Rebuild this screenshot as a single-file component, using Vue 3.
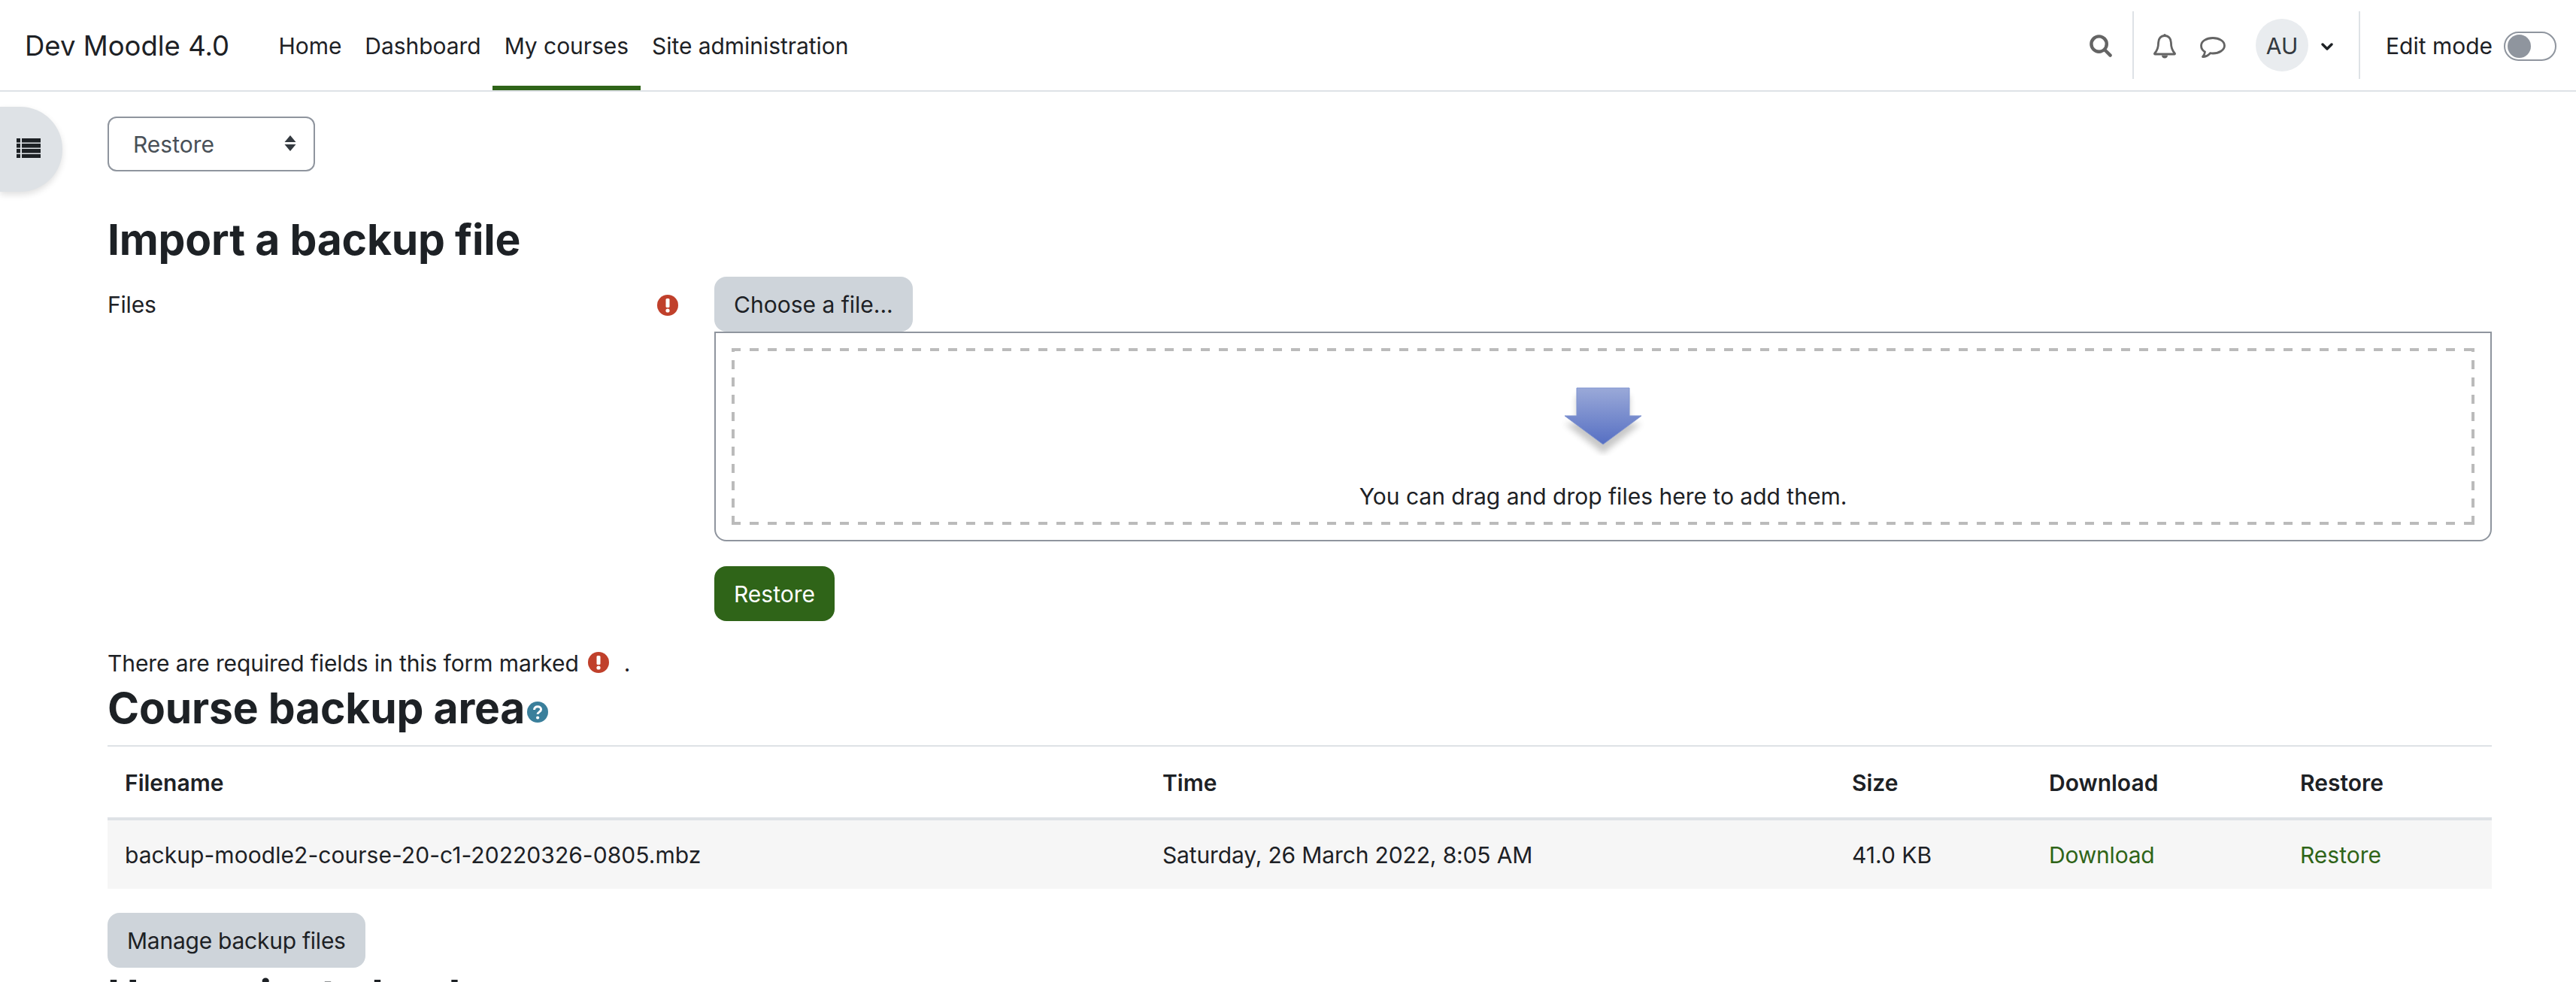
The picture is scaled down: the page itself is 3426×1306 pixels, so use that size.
<script setup>
const navItems = [
  { label: 'Home', active: false },
  { label: 'Dashboard', active: false },
  { label: 'My courses', active: true },
  { label: 'Site administration', active: false },
]
const headers = ['Filename', 'Time', 'Size', 'Download', 'Restore']
</script>

<template>
  <div class="page">
    <header class="navbar">
      <div class="brand">Dev Moodle 4.0</div>
      <nav class="nav">
        <a v-for="item in navItems" :key="item.label" class="nav-item" :class="{ active: item.active }">{{ item.label }}</a>
      </nav>
      <div class="nav-right">
        <svg class="ic-search" viewBox="0 0 30 30" width="30" height="30" fill="none" stroke="#646464" stroke-width="4.4" stroke-linecap="round">
          <circle cx="12.6" cy="12.6" r="10.2" />
          <path d="M20.5 20.5L27.6 27.6" />
        </svg>
        <span class="divider first"></span>
        <svg class="ic-bell" viewBox="0 0 30 34" width="30" height="34" fill="none" stroke="#646464" stroke-width="2.8" stroke-linejoin="round">
          <path d="M15 3.5c-5 0-8.400 3.800-8.400 9 0 7-1.200 10.500-5 14.500c-.4.500 0 1 .6 1h25.600c.6 0 1-.5.600-1c-3.800-4-5-7.500-5-14.500c0-5.200-3.400-9-8.400-9z" />
          <circle cx="15" cy="2.500" r="1.600" fill="#646464" stroke="none" />
          <path d="M11 29.500c0 2.500 1.800 4 4 4s4-1.500 4-4z" fill="#646464" stroke="none" />
        </svg>
        <svg class="ic-comment" viewBox="0 0 34 28" width="34" height="28" fill="none" stroke="#646464" stroke-width="2.800" stroke-linejoin="round">
          <path d="M17 1.500c8.500 0 15.500 4.400 15.500 10.200S25.500 22 17 22c-1.200 0-2.400-.1-3.500-.3C11 24.500 7.500 26.500 3.500 26.500c1.800-2 2.800-4 3-6.500C3.300 18 1.500 15 1.500 11.700C1.500 5.900 8.500 1.500 17 1.500z" />
        </svg>
        <div class="avatar">AU</div>
        <svg class="ic-chevron" viewBox="0 0 16 10" width="16" height="10" fill="none" stroke="#1d2125" stroke-width="3.400" stroke-linecap="round" stroke-linejoin="round">
          <path d="M2 2l6 6 6-6" />
        </svg>
        <span class="divider second"></span>
        <span class="edit-label">Edit mode</span>
        <span class="toggle"><span class="knob"></span></span>
      </div>
    </header>

    <button class="drawer-toggle" aria-label="Open course index">
      <svg viewBox="0 0 32 26" width="32" height="26" fill="#1d2125">
        <rect x="0" y="0" width="5" height="5.500" /><rect x="7" y="0" width="25" height="5.500" />
        <rect x="0" y="7" width="5" height="5.500" /><rect x="7" y="7" width="25" height="5.500" />
        <rect x="0" y="14" width="5" height="5.500" /><rect x="7" y="14" width="25" height="5.500" />
        <rect x="0" y="21" width="5" height="5" /><rect x="7" y="21" width="25" height="5" />
      </svg>
    </button>

    <main class="content">
      <div class="select">
        <span>Restore</span>
        <svg viewBox="0 0 18 21" width="18" height="21" fill="#343a40">
          <path d="M9 0l7.500 9H1.500zM9 21l-7.500-9h15z" />
        </svg>
      </div>

      <h2 class="h-import">Import a backup file</h2>

      <div class="form-row">
        <div class="label-col">
          <span class="files-label">Files</span>
          <svg class="req req-files" viewBox="0 0 28 28" width="28" height="28">
            <circle cx="14" cy="14" r="14" fill="#c0402b" />
            <rect x="11.500" y="5" width="5" height="12" rx="1.500" fill="#fff" />
            <circle cx="14" cy="21" r="2.600" fill="#fff" />
          </svg>
        </div>
        <div class="field-col">
          <button class="btn btn-grey">Choose a file...</button>
          <div class="dropbox">
            <div class="dashed">
              <svg class="arrow" viewBox="0 0 130 96" width="130" height="96">
                <defs>
                  <linearGradient id="arrowFill" x1="0" y1="0" x2="0" y2="1">
                    <stop offset="0" stop-color="#9aa9d8" />
                    <stop offset="1" stop-color="#566fc3" />
                  </linearGradient>
                  <filter id="arrowShadow" x="-20%" y="-20%" width="140%" height="160%">
                    <feGaussianBlur stdDeviation="4" />
                  </filter>
                </defs>
                <path d="M30 10h70v37h16L65 87 14 47h16z" fill="#000" opacity=".22" filter="url(#arrowShadow)" transform="translate(0 6)" />
                <path d="M30 6h70v37h16L65 81 14 43h16z" fill="url(#arrowFill)" stroke="#7f93d0" stroke-width="1" />
              </svg>
              <span class="drop-text">You can drag and drop files here to add them.</span>
            </div>
          </div>
          <button class="btn btn-primary">Restore</button>
        </div>
      </div>

      <p class="note">
        <span class="note-text">There are required fields in this form marked</span>
        <svg class="req req-note" viewBox="0 0 28 28" width="28" height="28">
          <circle cx="14" cy="14" r="14" fill="#c0402b" />
          <rect x="11.500" y="5" width="5" height="12" rx="1.500" fill="#fff" />
          <circle cx="14" cy="21" r="2.600" fill="#fff" />
        </svg>
        <span class="note-dot">.</span>
      </p>

      <h2 class="h-course">
        <span>Course backup area</span>
        <svg class="help" viewBox="0 0 28 28" width="28" height="28">
          <circle cx="14" cy="14" r="14" fill="#3a7f9b" />
          <path d="M9.500 11c0-2.800 2-4.300 4.600-4.300c2.700 0 4.500 1.600 4.500 3.800c0 3.400-4.500 3.300-4.500 6.300" fill="none" stroke="#fff" stroke-width="3" />
          <circle cx="14.100" cy="21.500" r="2.100" fill="#fff" />
        </svg>
      </h2>

      <table class="files">
        <colgroup>
          <col class="c1" /><col class="c2" /><col class="c3" /><col class="c4" /><col class="c5" />
        </colgroup>
        <thead>
          <tr><th v-for="h in headers" :key="h">{{ h }}</th></tr>
        </thead>
        <tbody>
          <tr>
            <td class="name">backup-moodle2-course-20-c1-20220326-0805.mbz</td>
            <td class="time">Saturday, 26 March 2022, 8:05 AM</td>
            <td>41.0 KB</td>
            <td><a class="link dl">Download</a></td>
            <td><a class="link">Restore</a></td>
          </tr>
        </tbody>
      </table>

      <button class="btn btn-grey manage">Manage backup files</button>

      <h2 class="h-user">User private backup area</h2>
    </main>
  </div>
</template>

<style scoped>
.page {
  position: relative;
  width: 3426px;
  height: 1306px;
  overflow: hidden;
  background: #fff;
  color: #1d2125;
  font-family: Inter, "Liberation Sans", sans-serif;
  font-size: 30px;
  line-height: 45px;
}
.navbar {
  display: flex;
  align-items: stretch;
  height: 120px;
  border-bottom: 2px solid #dee2e6;
  box-sizing: content-box;
}
.brand {
  margin-left: 33px;
  width: 322px;
  font-size: 36.5px;
  line-height: 122px;
  white-space: nowrap;
}
.nav {
  display: flex;
  margin-left: 0;
}
.nav-item {
  padding: 0 15.5px;
  line-height: 122px;
  height: 120px;
  box-sizing: border-box;
  white-space: nowrap;
  letter-spacing: -0.05px;
}
.nav-item.active {
  border-bottom: 6px solid #2f6418;
}
.nav-right {
  margin-left: auto;
  display: flex;
  align-items: center;
  padding-right: 26px;
}
.ic-search { margin-right: 27px; margin-top: 2px; }
.divider { width: 2px; height: 90px; background: #dee2e6; }
.ic-bell { margin-left: 26px; margin-right: 32px; margin-top: 1px; }
.ic-comment { margin-right: 40px; margin-top: 5px; }
.avatar {
  width: 70px;
  height: 70px;
  border-radius: 50%;
  background: #e9ecef;
  text-align: center;
  line-height: 72px;
  color: #343a40;
}
.ic-chevron { margin-left: 17px; margin-right: 34px; margin-top: 4px; }
.divider.second { margin-right: 34px; }
.edit-label { white-space: nowrap; width: 157px; padding-top: 2px; }
.toggle {
  position: relative;
  display: block;
  width: 70px;
  height: 39px;
  box-sizing: border-box;
  border: 2px solid #8f959e;
  border-radius: 20px;
  margin-top: 2px;
}
.knob {
  position: absolute;
  left: 3px;
  top: 2px;
  width: 31px;
  height: 31px;
  border-radius: 50%;
  background: #8f959e;
}
.drawer-toggle {
  position: absolute;
  left: 0;
  top: 142px;
  width: 83px;
  height: 113px;
  padding: 0 0 3px 22px;
  border: 0;
  border-radius: 0 56px 56px 0;
  background: #dee2e6;
  box-shadow: 0 4px 8px rgba(0, 0, 0, .12);
  display: flex;
  align-items: center;
  box-sizing: border-box;
}
.content {
  padding: 33px 112px 0 143px;
}
.select {
  width: 276px;
  height: 73px;
  box-sizing: border-box;
  border: 2px solid #8f959e;
  border-radius: 12px;
  padding: 2px 22px 0 32px;
  display: flex;
  align-items: center;
  justify-content: space-between;
  color: #495057;
}
.select svg { margin-top: -4px; }
h2 {
  margin: 0;
  font-size: 57px;
  line-height: 67px;
  font-weight: 700;
  letter-spacing: -0.2px;
}
.h-import { margin-top: 57px; margin-bottom: 16px; }
.form-row { display: flex; }
.label-col {
  position: relative;
  width: 807px;
  flex: none;
  height: 73px;
  display: flex;
  align-items: center;
}
.files-label { padding-top: 1px; letter-spacing: -0.2px; }
.req { display: block; flex: none; }
.req-files { margin-left: auto; margin-right: 48px; margin-top: 2px; }
.field-col { flex: 1; display: flex; flex-direction: column; align-items: flex-start; }
.btn {
  display: block;
  height: 73px;
  box-sizing: border-box;
  padding: 2px 26px 0;
  border: 0;
  border-radius: 16px;
  font: inherit;
  color: #1d2125;
  white-space: nowrap;
}
.btn-grey { background: #ced4da; }
.btn-primary { background: #2f6418; color: #fff; margin-top: 33px; }
.dropbox {
  align-self: stretch;
  box-sizing: border-box;
  height: 279px;
  border: 2px solid #8f959e;
  border-radius: 0 0 16px 16px;
  padding: 20px 21px;
}
.dashed {
  height: 235px;
  box-sizing: border-box;
  display: flex;
  flex-direction: column;
  align-items: center;
  background:
    repeating-linear-gradient(90deg, #bbb 0 12px, transparent 12px 24px) left top / 100% 4px no-repeat,
    repeating-linear-gradient(90deg, #bbb 0 12px, transparent 12px 24px) left bottom / 100% 4px no-repeat,
    repeating-linear-gradient(0deg, #bbb 0 12px, transparent 12px 23px) left top / 4px 100% no-repeat,
    repeating-linear-gradient(0deg, #bbb 0 12px, transparent 12px 23px) right top / 4px 100% no-repeat;
}
.arrow { margin-top: 47px; display: block; flex: none; }
.drop-text { margin-top: 32px; }
.note {
  margin: 34px 0 0;
  display: flex;
  align-items: center;
  white-space: nowrap;
}
.note-text { letter-spacing: -0.1px; }
.req-note { margin-left: 12px; margin-top: -3px; }
.note-dot { margin-left: 20px; }
.h-course {
  margin-top: 3px;
  display: flex;
  align-items: flex-start;
}
.help { margin-left: 3px; margin-top: 25px; flex: none; }
.files {
  margin-top: 16px;
  width: 3171px;
  table-layout: fixed;
  border-collapse: collapse;
}
.c1 { width: 1380px; }
.c2 { width: 917px; }
.c3 { width: 262px; }
.c4 { width: 334px; }
.c5 { width: 278px; }
th, td {
  padding: 2px 0 0 23px;
  height: 93px;
  box-sizing: border-box;
  text-align: left;
  white-space: nowrap;
  vertical-align: middle;
}
th {
  height: 97px;
  font-weight: 600;
  border-top: 2px solid #dee2e6;
  border-bottom: 4px solid #dee2e6;
}
td { background: #f6f6f6; }
.name { letter-spacing: 0.05px; }
.time { letter-spacing: -0.14px; }
.dl { letter-spacing: -0.2px; }
.link { color: #2f6418; }
.manage { margin-top: 32px; letter-spacing: -0.25px; }
.h-user { margin-top: 3px; }
</style>

<style>
html, body { margin: 0; overflow: hidden; background: #fff; }
</style>
